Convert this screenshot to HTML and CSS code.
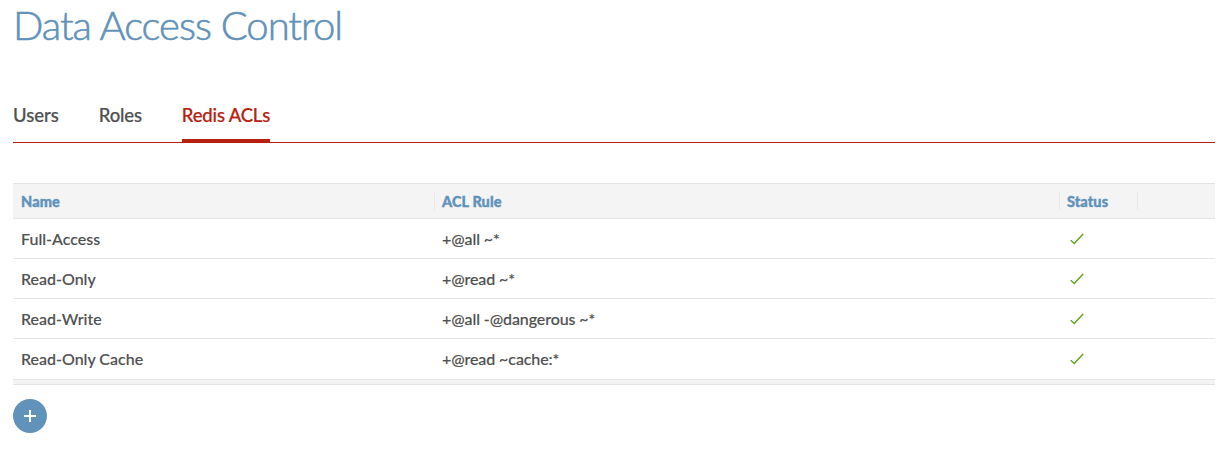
FILE: index.html
```html
<!DOCTYPE html>
<html lang="en">
<head>
<meta charset="utf-8">
<title>Data Access Control</title>
<link rel="stylesheet" href="styles.css">
</head>
<body>
<main class="page">
  <h1 class="title">Data Access Control</h1>
  <nav class="tabs">
    <a class="tab">Users</a>
    <a class="tab">Roles</a>
    <a class="tab active">Redis ACLs</a>
  </nav>
  <section class="grid">
    <div class="row head"><div class="cell">Name</div><div class="cell">ACL Rule</div><div class="cell">Status</div><div class="cell"></div></div>
    <div class="row"><div class="cell">Full-Access</div><div class="cell rule">+@all ~*</div><div class="cell"><svg class="check" viewBox="0 0 14 12"><path d="M.7 7.200l3.600 3.300L13.100 1"/></svg></div><div class="cell"></div></div>
    <div class="row"><div class="cell">Read-Only</div><div class="cell rule">+@read ~*</div><div class="cell"><svg class="check" viewBox="0 0 14 12"><path d="M.7 7.200l3.600 3.300L13.100 1"/></svg></div><div class="cell"></div></div>
    <div class="row"><div class="cell">Read-Write</div><div class="cell rule">+@all -@dangerous ~*</div><div class="cell"><svg class="check" viewBox="0 0 14 12"><path d="M.7 7.200l3.600 3.300L13.100 1"/></svg></div><div class="cell"></div></div>
    <div class="row last"><div class="cell">Read-Only Cache</div><div class="cell rule">+@read ~cache:*</div><div class="cell"><svg class="check" viewBox="0 0 14 12"><path d="M.7 7.200l3.600 3.300L13.100 1"/></svg></div><div class="cell"></div></div>
    <div class="foot"></div>
  </section>
  <button class="add" aria-label="Add"><svg viewBox="0 0 34 34"><path d="M17 11v12M11 17h12"/></svg></button>
</main>
</body>
</html>
```
FILE: styles.css
```css
* { box-sizing: border-box; }
body { margin: 0; background: #fff; color: #505050; font-family: Lato, sans-serif; overflow: hidden; }
.page { padding: 0 16px 0 13px; }
.title { margin: 0; padding-top: 1px; height: 90px; font-size: 40px; line-height: 48px; font-weight: 300; letter-spacing: -1.02px; color: #6192ba; -webkit-text-stroke: 0.6px #6192ba; }
.tabs { display: flex; gap: 40px; height: 53px; border-bottom: 1px solid #b72010; }
.tab { height: 53px; padding-top: 13px; font-size: 18.5px; line-height: 24px; font-weight: 500; letter-spacing: -0.17px; -webkit-text-stroke: 0.2px; }
.tab:first-child { letter-spacing: 0; }
.active { color: #b72010; border-bottom: 4px solid #b72010; }
.grid { margin-top: 40px; }
.row { display: grid; grid-template-columns: 422px 625px 78px 1fr; height: 40px; align-items: center; border-bottom: 1px solid #e6e6e6; font-size: 16px; font-weight: 500; -webkit-text-stroke: 0.15px; }
.cell { padding-left: 7px; white-space: nowrap; }
.cell:first-child { padding-left: 8px; }
.rule { letter-spacing: -0.09px; }
.head { height: 36px; background: #f4f4f4; border-top: 1px solid #e3e3e3; color: #6192ba; font-size: 14.5px; font-weight: 900; letter-spacing: 0.1px; -webkit-text-stroke: 0.4px; }
.head .cell { height: 18px; line-height: 20px; border-right: 1px solid #e8e8e8; }
.head .cell:last-child { border: 0; }
.last { height: 41px; padding-bottom: 1px; }
.check { display: block; width: 14px; height: 12px; margin-left: 3px; fill: none; stroke: #62a420; stroke-width: 1.5; }
.foot { height: 5px; background: #f4f4f4; border-bottom: 1px solid #e3e3e3; }
.add { display: block; width: 34px; height: 34px; padding: 0; margin-top: 14px; border: 0; border-radius: 50%; background: #6192ba; }
.add svg { display: block; fill: none; stroke: #fff; stroke-width: 2; }
```
